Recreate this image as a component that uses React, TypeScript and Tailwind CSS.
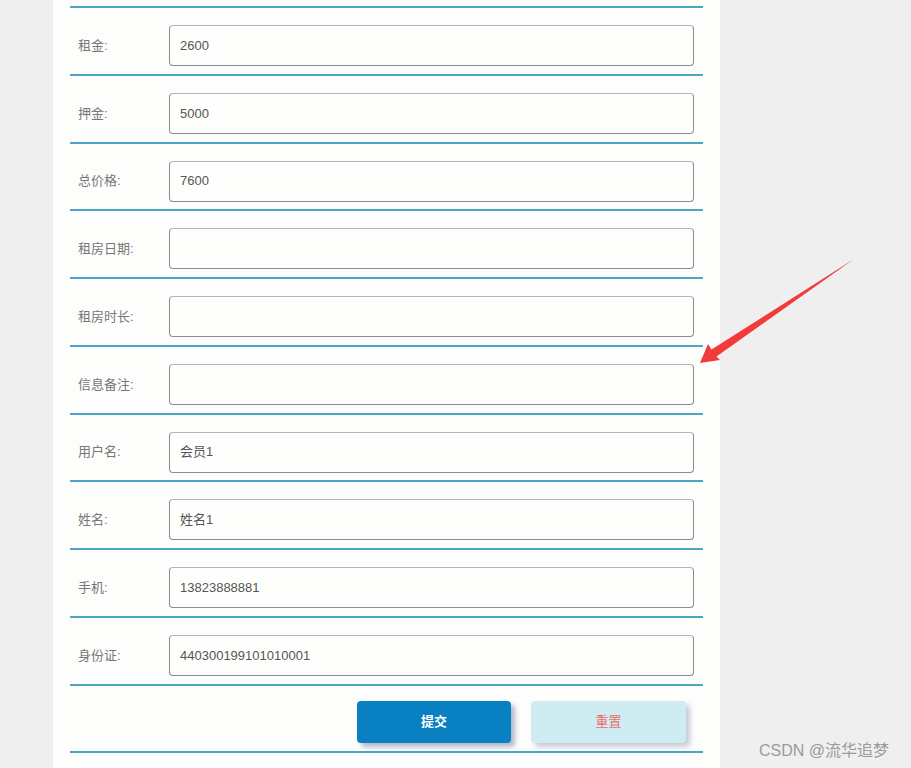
import React from "react";

const rows: { label: string; value: string }[] = [
  { label: "租金:", value: "2600" },
  { label: "押金:", value: "5000" },
  { label: "总价格:", value: "7600" },
  { label: "租房日期:", value: "" },
  { label: "租房时长:", value: "" },
  { label: "信息备注:", value: "" },
  { label: "用户名:", value: "会员1" },
  { label: "姓名:", value: "姓名1" },
  { label: "手机:", value: "13823888881" },
  { label: "身份证:", value: "440300199101010001" },
];

const font = { fontFamily: '"Liberation Sans", "Noto Sans CJK SC", sans-serif' };

export default function App() {
  return (
    <div className="relative h-[768px] w-[911px] overflow-hidden bg-[#efefef]" style={font}>
      <div className="ml-[53px] h-full w-[667px] bg-[#fdfdfb] px-[17px]">
        <div className="h-[8px] border-b-2 border-[#4ba6c6]" />
        {rows.map((r) => (
          <div key={r.label} className="flex h-[67.75px] items-start border-b-2 border-[#4ba6c6] pt-[17px]">
            <div className="flex h-[41px] w-[99px] items-center pl-[8px] text-[13px] text-[#777]">{r.label}</div>
            <div className="flex h-[41px] w-[525px] items-center rounded-[4px] border border-[#8c8c8c] border-t-[#b5b5b5] bg-[#fefefc] pl-[10px] text-[13px] text-[#555]">
              {r.value}
            </div>
          </div>
        ))}
        <div className="flex h-[67.75px] items-start justify-end gap-[20px] border-b-2 border-[#4ba6c6] pr-[17px] pt-[15px]">
          <button className="h-[42px] w-[154px] rounded-[4px] bg-[#0880c2] text-[13px] font-semibold text-white shadow-[4px_4px_5px_rgba(40,60,120,0.35)]">
            提交
          </button>
          <button className="h-[42px] w-[155px] rounded-[4px] bg-[#d0ecf3] text-[13px] text-[#ef6e6e] shadow-[4px_4px_5px_rgba(40,60,120,0.25)]">
            重置
          </button>
        </div>
      </div>
      <svg className="pointer-events-none absolute left-0 top-0" width="911" height="768">
        <polygon
          points="854,259 711.5,349.5 708,344 700,363 720,360 716.5,356.5"
          fill="#f23a3a"
        />
      </svg>
      <div className="absolute left-[759px] top-[739px] text-[16px] text-[#9a9a9a]" style={font}>
        CSDN @流华追梦
      </div>
    </div>
  );
}
